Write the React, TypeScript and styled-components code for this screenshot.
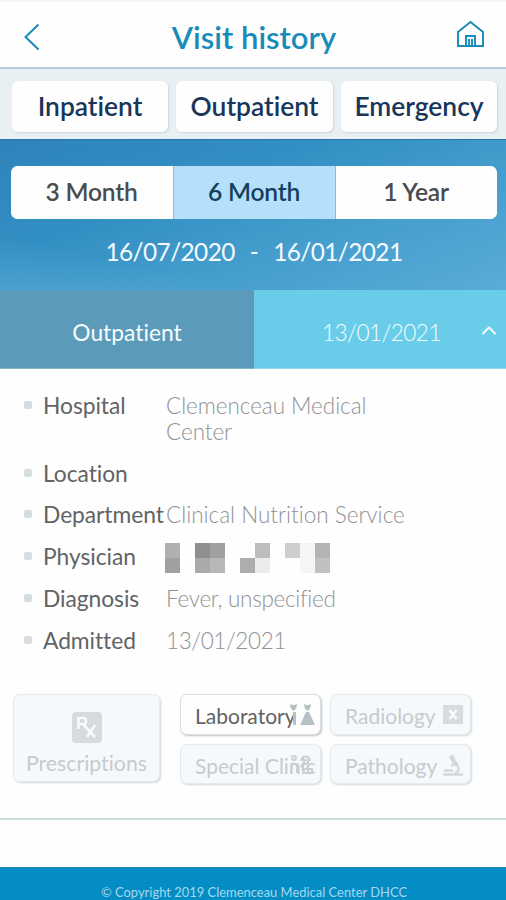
import React from 'react';
import styled, { createGlobalStyle } from 'styled-components';

const Global = createGlobalStyle`
  * { box-sizing: border-box; }
  html, body { margin: 0; padding: 0; background: #fefefe; }
  body { font-family: Lato, "Liberation Sans", sans-serif; font-variant-ligatures: none; overflow: hidden; }
  button { font-family: inherit; font-variant-ligatures: inherit; margin: 0; padding: 0; border: 0; background: none; }
`;

const Screen = styled.div`
  width: 506px;
  height: 900px;
  display: flex;
  flex-direction: column;
  background: #fefefe;
  overflow: hidden;
  white-space: nowrap;
`;

const Header = styled.header`
  height: 69px;
  flex: none;
  display: flex;
  align-items: center;
  justify-content: space-between;
  padding: 4px 20px 0 23px;
  border-top: 2px solid #f3f4f4;
  border-bottom: 2px solid #b2cdd5;
`;

const IconButton = styled.button`
  display: flex;
  width: 30px;
  height: 30px;

  svg { overflow: visible; }
`;

const Title = styled.h1`
  margin: 0 1px 0 0;
  font-size: 31px;
  line-height: 38px;
  font-weight: 600;
  color: #188bba;
`;

const TabBar = styled.nav`
  height: 70px;
  flex: none;
  display: grid;
  grid-template-columns: 156px 157px 156px;
  column-gap: 8px;
  padding: 12px 0 7px 12px;
  background: #e8f0f3;
`;

const Tab = styled.button`
  border-radius: 6px;
  background: #fefefe;
  box-shadow: 1px 1px 2px rgba(90, 115, 125, 0.2);
  font-size: 26.4px;
  font-weight: 600;
  line-height: 50px;
  padding-bottom: 1px;
  color: #17365a;
`;

const Period = styled.section`
  height: 151px;
  flex: none;
  display: flex;
  flex-direction: column;
  align-items: center;
  padding-top: 26px;
  border-top: 1px solid #2878ab;
  background:
    linear-gradient(12deg, rgba(110, 185, 225, 0.35) 0%, rgba(110, 185, 225, 0) 22%),
    linear-gradient(160deg, #2e83ba 0%, #338fc3 35%, #459ecd 65%, #5aabd8 100%);
`;

const Segments = styled.div`
  display: grid;
  grid-template-columns: 162px 163px 161px;
  width: 486px;
  height: 53px;
  margin-left: 1px;
  border-radius: 7px;
  overflow: hidden;
  background: #fefefe;
`;

const Segment = styled.button<{ $active?: boolean }>`
  font-size: 24.6px;
  letter-spacing: -0.2px;
  line-height: 52px;
  font-weight: 600;
  padding-bottom: 1px;
  color: ${(p) => (p.$active ? '#163f5d' : '#4a4b4d')};
  background: ${(p) => (p.$active ? '#b5e0fb' : '#fefefe')};
  box-shadow: ${(p) => (p.$active ? 'inset 1px 0 #8fbdd2, inset -1px 0 #8fbdd2' : 'none')};
`;

const Range = styled.div`
  display: flex;
  gap: 15px;
  margin-top: 17px;
  margin-left: 2px;
  font-size: 24.4px;
  letter-spacing: -0.6px;
  line-height: 32px;
  color: #f4faff;
`;

const Visit = styled.div`
  height: 79px;
  flex: none;
  display: grid;
  grid-template-columns: 254px 252px;
`;

const VisitCell = styled.div<{ $light?: boolean }>`
  display: flex;
  align-items: center;
  justify-content: ${(p) => (p.$light ? 'space-between' : 'center')};
  padding: ${(p) => (p.$light ? '6px 9px 0 68px' : '6px 0 0')};
  background: ${(p) => (p.$light ? '#69cdea' : '#5b9ab8')};
  border-bottom: 1px solid ${(p) => (p.$light ? '#8fdcf0' : '#82b2c8')};
  font-size: ${(p) => (p.$light ? '22.6px' : '22.8px')};
  letter-spacing: ${(p) => (p.$light ? '-0.55px' : '0')};
  font-weight: ${(p) => (p.$light ? 300 : 400)};
  color: #f5fcff;
`;

const Details = styled.dl`
  flex: none;
  height: 325px;
  margin: 0;
  padding: 24px 0 0 24px;
`;

const DetailRow = styled.div<{ $height: number }>`
  height: ${(p) => p.$height}px;
  display: grid;
  grid-template-columns: 19px 123px 240px;
  line-height: 26px;
`;

const Bullet = styled.span`
  width: 8px;
  height: 8px;
  margin-top: 8px;
  border-radius: 2px;
  background: #d5dde0;
`;

const Label = styled.dt`
  margin-top: -1px;
  font-size: 22.8px;
  letter-spacing: -0.05px;
  color: #626365;
`;

const Value = styled.dd<{ $spacing?: number }>`
  margin: 0;
  font-size: 22.5px;
  letter-spacing: ${(p) => p.$spacing ?? -0.05}px;
  font-weight: 300;
  color: #919294;
  white-space: pre-line;
`;

const Redacted = styled.svg`
  display: block;
  margin: -1px 0 0 -1px;
`;

const Actions = styled.div`
  flex: none;
  height: 126px;
  display: flex;
  padding-left: 13px;
  border-bottom: 2px solid #cbdcdd;
`;

const ActionGrid = styled.div`
  display: grid;
  grid-template-columns: 141px 141px;
  grid-template-rows: 41px 40px;
  gap: 9px 9px;
  margin-left: 20px;
`;

const Card = styled.button<{ $enabled?: boolean }>`
  position: relative;
  display: flex;
  align-items: center;
  border: 1px solid ${(p) => (p.$enabled ? '#d9dfe1' : '#e4eaed')};
  border-radius: 7px;
  background: ${(p) => (p.$enabled ? '#fefefe' : '#f6f9fb')};
  box-shadow: 1px 1px 2px ${(p) => (p.$enabled ? 'rgba(90,110,120,.4)' : 'rgba(110,130,140,.3)')};
  color: ${(p) => (p.$enabled ? '#626365' : '#c5cbce')};
`;

const TallCard = styled(Card)`
  width: 147px;
  height: 88px;
  flex-direction: column;
  padding-top: 17px;
  font-size: 21.3px;
  line-height: 28px;
  gap: 6px;
`;

const SmallCard = styled(Card)`
  padding: 2px 0 0 14px;
  font-size: 21px;
`;

const CardIcon = styled.svg`
  position: absolute;
  right: 4px;
  top: 9px;
  width: 26px;
  height: 24px;
`;

const Footer = styled.footer`
  margin-top: 47px;
  height: 33px;
  flex: none;
  padding: 15px 0 0 2px;
  border-top: 1px solid #187fae;
  background: #048cc4;
  text-align: center;
  font-size: 12.95px;
  line-height: 18px;
  color: #a5d8ee;
`;

const FlaskIcon = () => (
  <CardIcon viewBox="0 0 26 24" fill="#b4c1c5">
    <path d="M0 0q3.500 2 7 0 0 5-3.500 7Q0 5 0 0ZM3 8h3v13H3ZM14 0q3.500 2 7 0 0 5-3.500 7Q14 5 14 0ZM16 8h3l6 13H10Z" />
  </CardIcon>
);

const XrayIcon = () => (
  <CardIcon viewBox="0 0 26 24">
    <path fill="#d5dbde" d="M3 1h20v19H3z" />
    <path stroke="#f8fafb" strokeWidth="2.800" d="m9.500 6 7 9m0-9-7 9" />
  </CardIcon>
);

const ClinicIcon = () => (
  <CardIcon viewBox="0 0 26 24" fill="none" stroke="#c9d0d3" strokeWidth="2">
    <circle cx="4" cy="4" r="2" />
    <path d="M1 19v-7q3-5 6 0v7M11 7c1-6 8-6 9 0M14 9q-5 3 0 6h8M12 15l3 4h7v-5" />
    <circle cx="16" cy="8" r="2" />
  </CardIcon>
);

const MicroscopeIcon = () => (
  <CardIcon viewBox="0 0 26 24" fill="none">
    <path stroke="#d1d8db" strokeWidth="4.500" d="m11 1.500 4.500 9" />
    <path stroke="#d1d8db" strokeWidth="2.400" d="m11 12 7-3M14 9c6 4 6 7 1 11M4 16.500h9M3 20.500h20" />
  </CardIcon>
);

const mosaic: [number, number, string][] = [
  [0, 0, '#b0b0b0'], [0, 15, '#a0a0a0'], [30, 0, '#8f8f8f'], [45, 0, '#a0a0a0'],
  [30, 15, '#aaaaaa'], [45, 15, '#b8b8b8'], [90, 0, '#bdbdbd'], [75, 15, '#adadad'],
  [90, 15, '#ececec'], [120, 0, '#cecece'], [135, 0, '#f5f5f5'], [135, 15, '#f5f5f5'],
  [150, 0, '#b4b4b4'], [150, 15, '#c0c0c0'],
];

const details: { label: string; value: React.ReactNode; height: number; spacing?: number }[] = [
  { label: 'Hospital', value: 'Clemenceau Medical\nCenter', height: 68 },
  { label: 'Location', value: '', height: 41 },
  { label: 'Department', value: 'Clinical Nutrition Service', height: 42, spacing: 0 },
  {
    label: 'Physician',
    value: (
      <Redacted width="165" height="30" aria-label="Redacted name">
        {mosaic.map(([x, y, fill]) => (
          <rect key={`${x}-${y}`} x={x} y={y} width="15" height="15" fill={fill} />
        ))}
      </Redacted>
    ),
    height: 42,
  },
  { label: 'Diagnosis', value: 'Fever, unspecified', height: 42, spacing: -0.3 },
  { label: 'Admitted', value: '13/01/2021', height: 42, spacing: -0.4 },
];

export default function App() {
  return (
    <>
      <Global />
      <Screen>
        <Header>
          <IconButton aria-label="Back">
            <svg width="30" height="30" fill="none" stroke="#188bba" strokeWidth="2">
              <path d="M15.500 2.500 2.500 15l13 12.500" />
            </svg>
          </IconButton>
          <Title>Visit history</Title>
          <IconButton aria-label="Home">
            <svg width="30" height="30" fill="none" stroke="#188bba" strokeWidth="1.900">
              <path d="M2 24V10L14.500 0 27 10V24ZM10 24V14h9V24M13 24v-7m3 7v-7" />
            </svg>
          </IconButton>
        </Header>
        <TabBar>
          <Tab>Inpatient</Tab>
          <Tab>Outpatient</Tab>
          <Tab>Emergency</Tab>
        </TabBar>
        <Period>
          <Segments>
            <Segment>3 Month</Segment>
            <Segment $active>6 Month</Segment>
            <Segment>1 Year</Segment>
          </Segments>
          <Range>
            <span>16/07/2020</span>
            <span>-</span>
            <span>16/01/2021</span>
          </Range>
        </Period>
        <Visit>
          <VisitCell>Outpatient</VisitCell>
          <VisitCell $light>
            <span>13/01/2021</span>
            <svg width="16" height="14" fill="none" stroke="#f5fcff" strokeWidth="2">
              <path d="m1.500 9 6.500-6.500L14.500 9" />
            </svg>
          </VisitCell>
        </Visit>
        <Details>
          {details.map((d) => (
            <DetailRow key={d.label} $height={d.height}>
              <Bullet />
              <Label>{d.label}</Label>
              <Value $spacing={d.spacing}>{d.value}</Value>
            </DetailRow>
          ))}
        </Details>
        <Actions>
          <TallCard>
            <svg width="30" height="31" fill="none">
              <rect width="30" height="31" rx="4" fill="#d5dbde" />
              <path stroke="#f8fafb" strokeWidth="2.600" d="M6.500 17V6H11q3 0 3 3t-3 3H7m4 0 12 13M23 13l-8 12" />
            </svg>
            <span>Prescriptions</span>
          </TallCard>
          <ActionGrid>
            <SmallCard $enabled>Laboratory<FlaskIcon /></SmallCard>
            <SmallCard>Radiology<XrayIcon /></SmallCard>
            <SmallCard>Special Clinic<ClinicIcon /></SmallCard>
            <SmallCard>Pathology<MicroscopeIcon /></SmallCard>
          </ActionGrid>
        </Actions>
        <Footer>© Copyright 2019 Clemenceau Medical Center DHCC</Footer>
      </Screen>
    </>
  );
}
